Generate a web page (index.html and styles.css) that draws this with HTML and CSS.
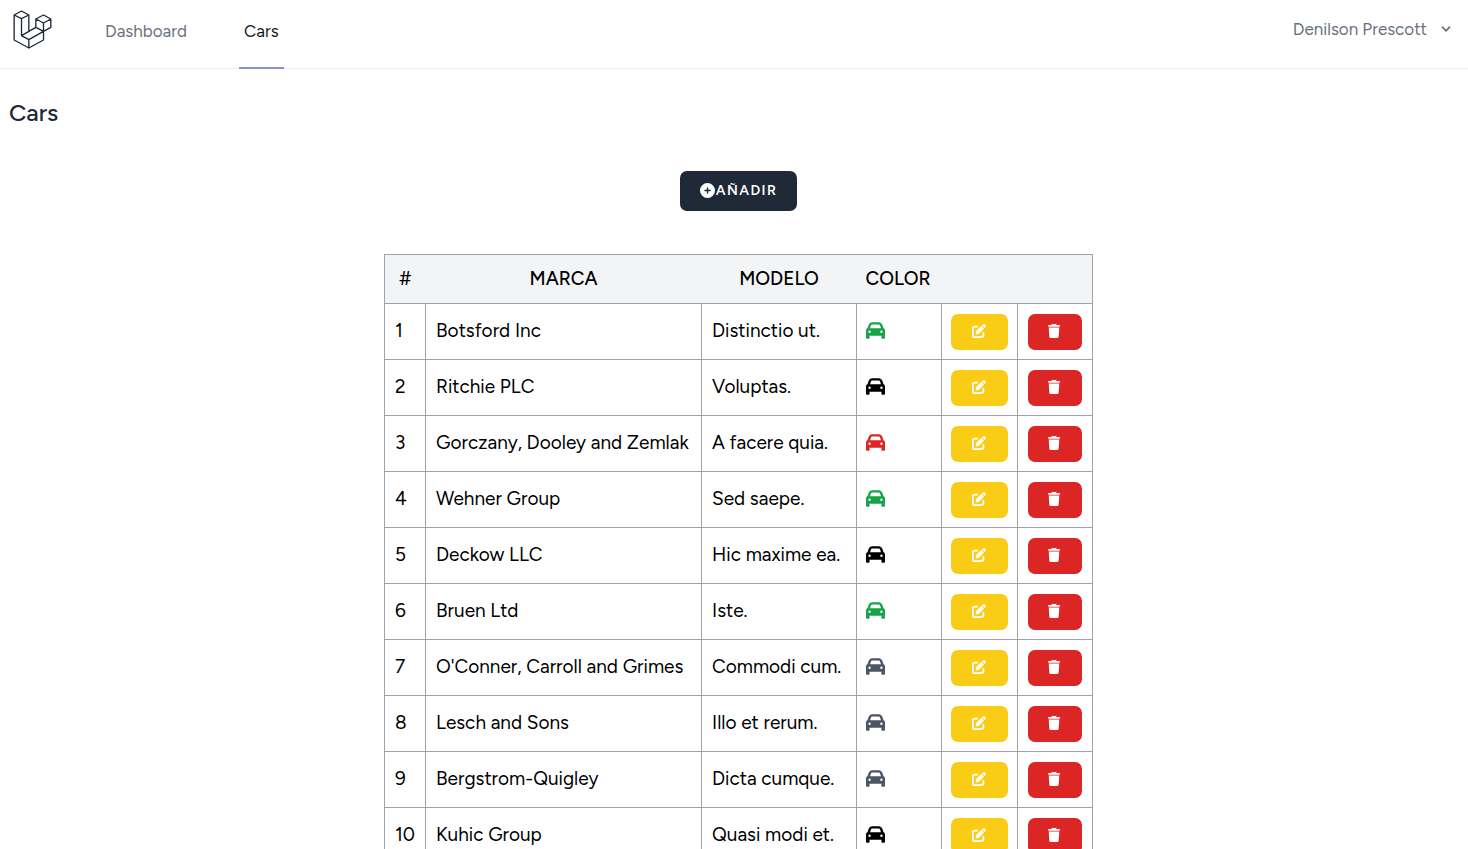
FILE: index.html
```html
<!DOCTYPE html>
<html lang="es">
<head>
<meta charset="utf-8">
<meta name="viewport" content="width=device-width, initial-scale=1">
<title>Cars</title>
<link rel="stylesheet" href="styles.css">
</head>
<body>
<svg class="sprite" aria-hidden="true">
  <symbol id="car" viewBox="0 0 512 512"><path d="M135.2 117.4L109.1 192H402.9l-26.1-74.6C372.3 104.6 360.2 96 346.6 96H165.4c-13.6 0-25.7 8.6-30.2 21.4zM39.6 196.8L74.8 96.3C88.3 57.8 124.6 32 165.4 32H346.6c40.8 0 77.1 25.8 90.6 64.3l35.2 100.5c23.2 9.6 39.6 32.5 39.6 59.2V400v48c0 17.7-14.3 32-32 32H448c-17.7 0-32-14.3-32-32V400H96v48c0 17.7-14.3 32-32 32H32c-17.7 0-32-14.3-32-32V400 256c0-26.7 16.4-49.6 39.6-59.2zM128 288a32 32 0 1 0 -64 0 32 32 0 1 0 64 0zm288 32a32 32 0 1 0 0-64 32 32 0 1 0 0 64z"/></symbol>
  <symbol id="edit" viewBox="0 0 512 512"><path d="M471.6 21.7c-21.9-21.9-57.3-21.9-79.2 0L362.3 51.7l97.9 97.9 30.1-30.1c21.9-21.9 21.9-57.3 0-79.2L471.6 21.7zm-299.2 220c-6.1 6.1-10.8 13.6-13.5 21.9l-29.6 88.8c-2.9 8.6-.6 18.1 5.8 24.6s15.9 8.7 24.6 5.8l88.8-29.6c8.2-2.7 15.7-7.4 21.9-13.5L437.7 172.3 339.7 74.3 172.4 241.7zM96 64C43 64 0 107 0 160V416c0 53 43 96 96 96H352c53 0 96-43 96-96V320c0-17.7-14.3-32-32-32s-32 14.3-32 32v96c0 17.7-14.3 32-32 32H96c-17.7 0-32-14.3-32-32V160c0-17.7 14.3-32 32-32h96c17.7 0 32-14.3 32-32s-14.3-32-32-32H96z"/></symbol>
  <symbol id="trash" viewBox="0 0 448 512"><path d="M135.2 17.7L128 32H32C14.3 32 0 46.3 0 64S14.3 96 32 96H416c17.7 0 32-14.3 32-32s-14.3-32-32-32H320l-7.2-14.3C307.4 6.8 296.3 0 284.2 0H163.8c-12.1 0-23.2 6.8-28.6 17.7zM416 128H32L53.2 467c1.6 25.3 22.6 45 47.9 45H346.9c25.3 0 46.3-19.7 47.9-45L416 128z"/></symbol>
  <symbol id="plus" viewBox="0 0 512 512"><path d="M256 512A256 256 0 1 0 256 0a256 256 0 1 0 0 512zM232 344V280H168c-13.3 0-24-10.7-24-24s10.7-24 24-24h64V168c0-13.3 10.7-24 24-24s24 10.7 24 24v64h64c13.3 0 24 10.7 24 24s-10.7 24-24 24H280v64c0 13.3-10.7 24-24 24s-24-10.7-24-24z"/></symbol>
</svg>
<header class="topbar">
  <a class="logo" href="#" aria-label="Inicio">
    <svg viewBox="39 30 116 117"><path d="M64 33L42 45V120L86 144L130 120V94L152 82V57L130 45L107 57V82L130 94L86 119L64 107V56L42 45M64 33L86 45L64 56M86 45V94M64 107L107 82M86 119V144M107 57L130 69L152 57M130 69V94"/></svg>
  </a>
  <nav class="nav">
    <a class="nav-link" href="#">Dashboard</a>
    <a class="nav-link active" href="#" aria-current="page">Cars</a>
  </nav>
  <button class="user" type="button">Denilson Prescott
    <svg class="chevron" viewBox="0 0 20 20" aria-hidden="true"><path d="M5.293 7.293a1 1 0 011.414 0L10 10.586l3.293-3.293a1 1 0 111.414 1.414l-4 4a1 1 0 01-1.414 0l-4-4a1 1 0 010-1.414z"/></svg>
  </button>
</header>
<main class="page">
  <h1 class="title">Cars</h1>
  <button class="add" type="button"><svg class="icon-add" aria-hidden="true"><use href="#plus"/></svg>AÑADIR</button>
  <table class="cars">
    <colgroup><col class="col-id"><col class="col-brand"><col class="col-model"><col class="col-color"><col class="col-edit"><col class="col-delete"></colgroup>
    <thead>
      <tr><th>#</th><th>MARCA</th><th>MODELO</th><th class="start">COLOR</th><th></th><th></th></tr>
    </thead>
    <tbody>
      <tr><td>1</td><td>Botsford Inc</td><td>Distinctio ut.</td><td class="paint"><svg class="car green"><use href="#car"/></svg></td><td class="tool"><button class="action edit" type="button" aria-label="Editar"><svg class="icon-small"><use href="#edit"/></svg></button></td><td class="tool"><button class="action delete" type="button" aria-label="Eliminar"><svg class="icon-small"><use href="#trash"/></svg></button></td></tr>
      <tr><td>2</td><td>Ritchie PLC</td><td>Voluptas.</td><td class="paint"><svg class="car black"><use href="#car"/></svg></td><td class="tool"><button class="action edit" type="button" aria-label="Editar"><svg class="icon-small"><use href="#edit"/></svg></button></td><td class="tool"><button class="action delete" type="button" aria-label="Eliminar"><svg class="icon-small"><use href="#trash"/></svg></button></td></tr>
      <tr><td>3</td><td>Gorczany, Dooley and Zemlak</td><td>A facere quia.</td><td class="paint"><svg class="car red"><use href="#car"/></svg></td><td class="tool"><button class="action edit" type="button" aria-label="Editar"><svg class="icon-small"><use href="#edit"/></svg></button></td><td class="tool"><button class="action delete" type="button" aria-label="Eliminar"><svg class="icon-small"><use href="#trash"/></svg></button></td></tr>
      <tr><td>4</td><td>Wehner Group</td><td>Sed saepe.</td><td class="paint"><svg class="car green"><use href="#car"/></svg></td><td class="tool"><button class="action edit" type="button" aria-label="Editar"><svg class="icon-small"><use href="#edit"/></svg></button></td><td class="tool"><button class="action delete" type="button" aria-label="Eliminar"><svg class="icon-small"><use href="#trash"/></svg></button></td></tr>
      <tr><td>5</td><td>Deckow LLC</td><td>Hic maxime ea.</td><td class="paint"><svg class="car black"><use href="#car"/></svg></td><td class="tool"><button class="action edit" type="button" aria-label="Editar"><svg class="icon-small"><use href="#edit"/></svg></button></td><td class="tool"><button class="action delete" type="button" aria-label="Eliminar"><svg class="icon-small"><use href="#trash"/></svg></button></td></tr>
      <tr><td>6</td><td>Bruen Ltd</td><td>Iste.</td><td class="paint"><svg class="car green"><use href="#car"/></svg></td><td class="tool"><button class="action edit" type="button" aria-label="Editar"><svg class="icon-small"><use href="#edit"/></svg></button></td><td class="tool"><button class="action delete" type="button" aria-label="Eliminar"><svg class="icon-small"><use href="#trash"/></svg></button></td></tr>
      <tr><td>7</td><td>O'Conner, Carroll and Grimes</td><td>Commodi cum.</td><td class="paint"><svg class="car gray"><use href="#car"/></svg></td><td class="tool"><button class="action edit" type="button" aria-label="Editar"><svg class="icon-small"><use href="#edit"/></svg></button></td><td class="tool"><button class="action delete" type="button" aria-label="Eliminar"><svg class="icon-small"><use href="#trash"/></svg></button></td></tr>
      <tr><td>8</td><td>Lesch and Sons</td><td>Illo et rerum.</td><td class="paint"><svg class="car gray"><use href="#car"/></svg></td><td class="tool"><button class="action edit" type="button" aria-label="Editar"><svg class="icon-small"><use href="#edit"/></svg></button></td><td class="tool"><button class="action delete" type="button" aria-label="Eliminar"><svg class="icon-small"><use href="#trash"/></svg></button></td></tr>
      <tr><td>9</td><td>Bergstrom-Quigley</td><td>Dicta cumque.</td><td class="paint"><svg class="car gray"><use href="#car"/></svg></td><td class="tool"><button class="action edit" type="button" aria-label="Editar"><svg class="icon-small"><use href="#edit"/></svg></button></td><td class="tool"><button class="action delete" type="button" aria-label="Eliminar"><svg class="icon-small"><use href="#trash"/></svg></button></td></tr>
      <tr><td>10</td><td>Kuhic Group</td><td>Quasi modi et.</td><td class="paint"><svg class="car black"><use href="#car"/></svg></td><td class="tool"><button class="action edit" type="button" aria-label="Editar"><svg class="icon-small"><use href="#edit"/></svg></button></td><td class="tool"><button class="action delete" type="button" aria-label="Eliminar"><svg class="icon-small"><use href="#trash"/></svg></button></td></tr>
    </tbody>
  </table>
</main>
</body>
</html>
```
FILE: styles.css
```css
* { box-sizing: border-box; }

html { scrollbar-width: none; }

body {
  margin: 0;
  background: #fff;
  color: #000;
  font-family: Figtree, Lato, "Liberation Sans", sans-serif;
  font-size: 19px;
  line-height: 28px;
}

button { border: 0; font-family: inherit; cursor: pointer; }

svg { display: block; fill: currentColor; }

.sprite { display: none; }

.topbar {
  display: flex;
  align-items: stretch;
  height: 69px;
  padding: 0 13px;
  border-bottom: 1px solid #edeef1;
}

.logo { padding-top: 10px; color: #1f2937; }
.logo svg { width: 39px; height: 39px; fill: none; stroke: currentColor; stroke-width: 4; stroke-linejoin: round; }

.nav { display: flex; gap: 47px; margin: 0 auto 0 48px; }

.nav-link {
  padding: 17px 5px 0;
  margin-bottom: -1px;
  border-bottom: 2px solid transparent;
  color: #6b7280;
  font-size: 17px;
  text-decoration: none;
}
.nav-link.active { color: #111827; border-color: #8a8fce; }

.user {
  display: flex;
  align-items: center;
  align-self: flex-start;
  gap: 10px;
  margin-top: 15px;
  padding: 0;
  background: none;
  color: #6b7280;
  font-size: 17px;
  line-height: 28px;
}
.chevron { width: 18px; height: 18px; }

.page {
  display: flex;
  flex-direction: column;
  align-items: center;
  padding: 28px 0 40px 9px;
}

.title {
  align-self: flex-start;
  margin: 0 0 42px;
  color: #1f2937;
  font-size: 24px;
  font-weight: 500;
  line-height: 32px;
}

.add {
  display: flex;
  align-items: center;
  justify-content: center;
  gap: 1px;
  height: 40px;
  margin-bottom: 43px;
  padding: 0 20px 2px;
  border-radius: 7px;
  background: #1f2937;
  color: #fff;
  font-size: 14px;
  font-weight: 600;
  letter-spacing: 0.1em;
}

.icon-small { width: 14px; height: 14px; }
.icon-add { width: 15px; height: 15px; margin-top: 1px; }

.cars { table-layout: fixed; border-collapse: collapse; border: 1px solid #9ca3af; }
.col-id { width: 41px; }
.col-brand { width: 276px; }
.col-model { width: 155px; }
.col-color { width: 85px; }
.col-edit { width: 76px; }
.col-delete { width: 75px; }

.cars th { height: 49px; padding: 0; background: #f3f4f6; font-weight: 500; }
.cars th.start { padding-left: 9px; text-align: left; }
.cars td { height: 56px; padding: 0 9px 2px 10px; border: 1px solid #9ca3af; white-space: nowrap; }
.cars td.paint { padding: 0 9px 3px; }
.cars td.tool { padding: 0 9px; }
.cars td.tool:last-child { padding: 0 10px; }

.car { width: 19px; height: 19px; }
.green { color: #16a34a; }
.black { color: #000; }
.red { color: #dc2626; }
.gray { color: #4b5563; }

.action {
  display: flex;
  align-items: center;
  justify-content: center;
  width: 100%;
  height: 36px;
  padding: 0 2px 1px 0;
  border-radius: 7px;
  color: #fff;
}
.edit { background: #facc15; }
.delete { background: #dc2626; }
```
